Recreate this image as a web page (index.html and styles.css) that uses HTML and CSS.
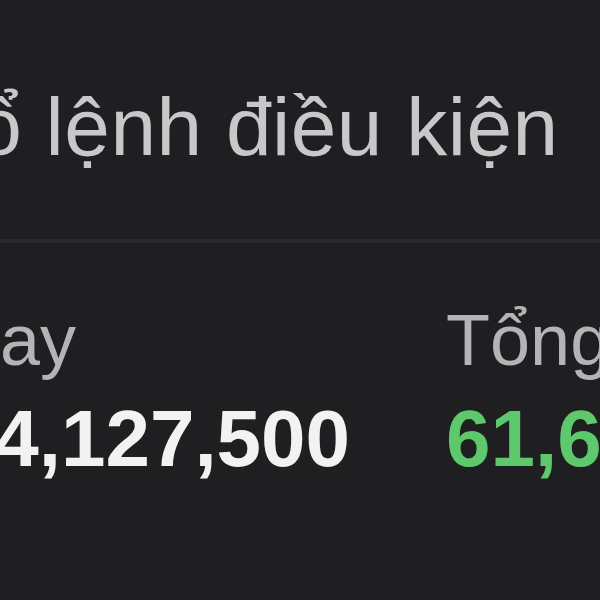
FILE: index.html
```html
<!DOCTYPE html>
<html lang="vi">
<head>
    <meta charset="UTF-8"/>
    <meta name="viewport" content="width=device-width, initial-scale=1.0"/>
    <title>Sổ lệnh điều kiện</title>
    <link rel="stylesheet" href="styles.css">
</head>
<body>
<div id="panel">
    <div class="title">Sổ lệnh điều kiện</div>
    <div class="divider"></div>
    <div class="stats">
        <div class="stat stat-today">
            <div class="label">Hôm nay</div>
            <div class="value">12,534,127,500</div>
        </div>
        <div class="stat">
            <div class="label">Tổng</div>
            <div class="value up">61,650,000</div>
        </div>
    </div>
</div>
</body>
</html>
```

FILE: styles.css
```css
body {
    margin: 0;
    padding: 0;
    background-color: #1f1f22;
    font-family: "Liberation Sans", Arial, sans-serif;
    overflow: hidden;
}

#panel {
    width: 600px;
    height: 600px;
    overflow: hidden;
}

.title {
    margin-left: -79px;
    padding-top: 86px;
    font-size: 82px;
    line-height: 1;
    letter-spacing: 0.5px;
    color: #c8c8ca;
    white-space: nowrap;
}

.divider {
    margin-top: 71px;
    height: 4px;
    background-color: #2a2a2c;
}

.stats {
    display: flex;
    gap: 96px;
    padding-top: 61px;
    white-space: nowrap;
}

.stat-today {
    margin-left: -206px;
}

.stat-today .label {
    margin-left: -6px;
}

.label {
    font-size: 72px;
    line-height: 1;
    color: #b4b4b6;
}

.value {
    margin-top: 23px;
    font-size: 80px;
    line-height: 1;
    font-weight: bold;
    color: #f2f2f2;
}

.value.up {
    color: #5ec86c;
}
```
